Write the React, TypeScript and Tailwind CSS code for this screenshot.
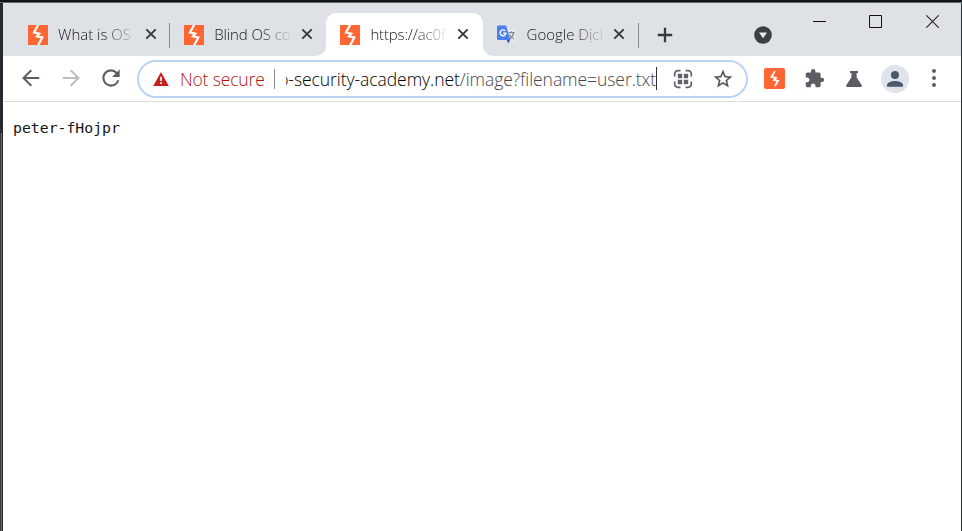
import type { ReactNode } from "react";

function BurpIcon({ rounded = false }: { rounded?: boolean }) {
  return (
    <svg viewBox="0 0 20 20" className="block size-full">
      <rect width="20" height="20" rx={rounded ? 1.8 : 0} fill="#ff6633" />
      {rounded ? (
        <path d="M10.4 3 7.2 8.4l4 .9-1.6 2 3.8.9-3 4.9" fill="none" stroke="#fff" strokeWidth="1.7" />
      ) : (
        <path d="M10.3-.5 6 7.6l5.2 1.1-2.3 2.6 5.4 1.2-4.3 8" fill="none" stroke="#fff" strokeWidth="2.2" />
      )}
    </svg>
  );
}

function TranslateIcon() {
  return (
    <svg viewBox="0 0 20 20" className="block size-full">
      <path d="M8 4.8h10.2v11.4H12z" fill="#e9ebee" />
      <path d="M11.5 7.7h6M14.5 6.2v1.5M16.6 8c-.6 3-2.2 5-4.6 6M12.4 9.5c1 1.8 2.6 3.4 4.8 4.5" fill="none" stroke="#7d8a94" strokeWidth="1.3" />
      <path d="M9.5 14.5h4l-2.4 4z" fill="#3457a8" />
      <path d="M1.3.5h7.8L13.4 15H1.3A1.3 1.3 0 0 1 0 13.7V1.8A1.3 1.3 0 0 1 1.3.5z" fill="#4a80ea" />
      <path d="M8.2 5.9A2.9 2.9 0 1 0 8.9 8.2H6.2" fill="none" stroke="#fff" strokeWidth="1.4" />
    </svg>
  );
}

function CloseIcon() {
  return (
    <svg viewBox="0 0 12 12" className="block size-3 shrink-0">
      <path d="m1.3 1.3 9.4 9.4m0-9.4-9.4 9.4" stroke="#36393e" strokeWidth="1.9" fill="none" />
    </svg>
  );
}

type TabProps = {
  icon: ReactNode;
  title: string;
  tracking: string;
  active?: boolean;
  divider?: boolean;
};

function Tab({ icon, title, tracking, active, divider }: TabProps) {
  return (
    <div
      className={`relative flex h-[43px] w-[156.2px] shrink-0 items-center pl-[14px] pr-[13.5px] pb-0.5 ${
        active ? "rounded-t-[10px] bg-white" : ""
      }`}
    >
      {active && (
        <>
          <svg viewBox="0 0 10 10" className="absolute bottom-0 -left-2.5 size-2.5">
            <path d="M10 0v10H0A10 10 0 0 0 10 0z" fill="#fff" />
          </svg>
          <svg viewBox="0 0 10 10" className="absolute bottom-0 -right-2.5 size-2.5">
            <path d="M0 0v10h10A10 10 0 0 1 0 0z" fill="#fff" />
          </svg>
        </>
      )}
      <span className="mt-0.5 size-5 shrink-0">{icon}</span>
      <span
        className={`ml-[10px] w-[76px] shrink-0 text-[15px] leading-6 font-[350] whitespace-nowrap text-[#15181b] [mask-image:linear-gradient(to_right,#000_60%,transparent_105%)] ${tracking}`}
      >
        {title}
      </span>
      <span className="ml-auto">
        <CloseIcon />
      </span>
      {divider && <span className="absolute top-[10px] right-0 h-[25px] w-px bg-[#85888c]" />}
    </div>
  );
}

function TabStrip() {
  return (
    <div className="flex h-[53px] items-end bg-[#dee1e6] pl-[11px]">
      <Tab icon={<BurpIcon />} title="What is OS" tracking="tracking-[0px]" divider />
      <Tab icon={<BurpIcon />} title="Blind OS co" tracking="tracking-[-0.1px]" />
      <Tab icon={<BurpIcon />} title="https://ac0f" tracking="tracking-[-0.15px]" active />
      <Tab icon={<TranslateIcon />} title="Google Dịch" tracking="tracking-[0px]" divider />
      <div className="flex h-[43px] flex-1 items-center">
        <svg viewBox="0 0 16 16" className="ml-[18.5px] size-4">
          <path d="M8 .8v14.4M.8 8h14.4" stroke="#36393e" strokeWidth="2.3" />
        </svg>
        <svg viewBox="0 0 18 18" className="ml-[81px] size-[18px]">
          <circle cx="9" cy="9" r="8.8" fill="#3c4043" />
          <path d="M5 6.5h8L9 12.2z" fill="#e8eaed" />
        </svg>
      </div>
      <div className="mb-[28px] flex items-center pr-[22px]">
        <svg viewBox="0 0 13 13" className="mr-[43px] size-[13px]">
          <path d="M0 6.5h13" stroke="#111" />
        </svg>
        <svg viewBox="0 0 13 13" className="mr-[44px] size-[13px]">
          <path d="M.5.5h12v12H.5z" fill="none" stroke="#111" />
        </svg>
        <svg viewBox="0 0 13 13" className="size-[13px]">
          <path d="m.3.3 12.4 12.4m0-12.4L.3 12.7" stroke="#222" strokeWidth="1.1" />
        </svg>
      </div>
    </div>
  );
}

function AddressBar() {
  return (
    <div className="ml-[15.5px] flex h-[38px] w-[611px] shrink-0 items-center rounded-full border-[2.5px] border-[#bcd3f5] bg-white pl-[14.5px] text-[17.5px] leading-6 font-[350] whitespace-nowrap">
      <svg viewBox="0 0 16 14" className="h-[14px] w-4 shrink-0">
        <path d="M8 0 15.8 14H.2z" fill="#c5221f" />
        <path d="M8 4.8v4.3M8 10.2v1.8" stroke="#fff" strokeWidth="1.7" />
      </svg>
      <span className="ml-[11px] w-[86px] shrink-0 tracking-[-0.15px] text-[#b3150f]">Not secure</span>
      <span className="ml-[7.5px] h-5 w-[1.5px] shrink-0 bg-[#85888c]" />
      <span className="ml-[11px] flex w-[370px] shrink-0 justify-end overflow-hidden tracking-[-0.06px] text-black">
        <span>
          o-security-academy.net<span className="text-[#45494d]">/image?filename=user.txt</span>
        </span>
      </span>
      <span className="h-[23px] w-px shrink-0 bg-[#333]" />
      <svg viewBox="0 0 20 20" className="ml-4 size-5 shrink-0">
        <path d="M7.5 1.7H4.7a3 3 0 0 0-3 3v2.8M12.5 1.7h2.8a3 3 0 0 1 3 3v2.8M7.5 18.3H4.7a3 3 0 0 1-3-3v-2.8M12.5 18.3h2.8a3 3 0 0 0 3-3v-2.8" fill="none" stroke="#5f6368" strokeWidth="1.7" />
        <path d="M4.8 4.8h4.4v4.4H4.8zM10.8 4.8h4.4v4.4h-4.4zM4.8 10.8h4.4v4.4H4.8zM10.8 10.8h4.4v4.4h-4.4z" fill="#5f6368" />
      </svg>
      <svg viewBox="0 0 24 24" className="ml-[19px] size-[22px] shrink-0">
        <path
          d="m22 9.24-7.19-.62L12 2 9.19 8.63 2 9.24l5.46 4.73L5.82 21 12 17.27 18.18 21l-1.63-7.03L22 9.24zM12 15.4l-3.76 2.27 1-4.28-3.32-2.88 4.38-.38L12 6.1l1.71 4.04 4.38.38-3.32 2.88 1 4.28L12 15.4z"
          fill="#4f5358"
          stroke="#4f5358"
          strokeWidth=".2"
        />
      </svg>
    </div>
  );
}

function Toolbar() {
  return (
    <div className="flex h-[46px] items-center border-b border-[#dcdddf] bg-white pl-[15.5px]">
      <svg viewBox="0 0 24 24" className="mb-px size-6">
        <path d="M20.3 12H4.8M12.3 4.2 4.5 12l7.8 7.8" fill="none" stroke="#5a5e63" strokeWidth="2" />
      </svg>
      <svg viewBox="0 0 24 24" className="mb-px ml-4 size-6">
        <path d="M3.7 12h15.5M11.7 4.2l7.8 7.8-7.8 7.8" fill="none" stroke="#babcbe" strokeWidth="2" />
      </svg>
      <svg viewBox="0 0 24 24" className="mb-px ml-[15px] size-[26px]">
        <path
          d="M17.65 6.35A7.958 7.958 0 0 0 12 4a8 8 0 1 0 7.73 10h-2.08A5.99 5.99 0 0 1 12 18c-3.31 0-6-2.69-6-6s2.69-6 6-6c1.66 0 3.14.69 4.22 1.78L13 11h7V4l-2.35 2.35z"
          fill="#5a5e63"
        />
      </svg>
      <div className="-ml-[2.5px]">
        <AddressBar />
      </div>
      <span className="ml-[16.5px] size-[21px]">
        <BurpIcon rounded />
      </span>
      <svg viewBox="0 0 24 24" className="ml-[19px] size-[21px]">
        <path
          d="M20.5 11H19V7c0-1.1-.9-2-2-2h-4V3.5a2.5 2.5 0 0 0-5 0V5H4c-1.1 0-1.99.9-1.99 2v3.8H3.5c1.49 0 2.7 1.21 2.7 2.7s-1.21 2.7-2.7 2.7H2V20c0 1.1.9 2 2 2h3.8v-1.5c0-1.49 1.21-2.7 2.7-2.7s2.7 1.21 2.7 2.7V22H17c1.1 0 2-.9 2-2v-4h1.5a2.5 2.5 0 0 0 0-5z"
          fill="#5a5e63"
        />
      </svg>
      <svg viewBox="0 0 16 16" className="ml-[21px] size-4">
        <path d="M4 0h8v1.9h-1.4v4.4l5 7.6A1.3 1.3 0 0 1 14.5 16h-13a1.3 1.3 0 0 1-1.1-2.1l5-7.6V1.9H4z" fill="#5a5e63" />
      </svg>
      <svg viewBox="0 0 28 28" className="ml-[18.5px] size-7">
        <circle cx="14" cy="14" r="14" fill="#dfe3ea" />
        <circle cx="14" cy="10" r="4" fill="#4c586b" />
        <path d="M6 21.8v-1.7c0-2.7 5.3-4.1 8-4.1s8 1.4 8 4.1v1.7z" fill="#4c586b" />
      </svg>
      <svg viewBox="0 0 4 18" className="mb-px ml-[23.5px] h-[18px] w-1">
        <path d="M2 2h0M2 9h0M2 16h0" stroke="#5a5e63" strokeWidth="4" strokeLinecap="round" />
      </svg>
    </div>
  );
}

export default function App() {
  return (
    <div className="flex h-[531px] w-[962px] flex-col overflow-hidden bg-[#121217] font-['Open_Sans','Noto_Sans',sans-serif]">
      <div className="h-0.5 shrink-0" />
      <div className="h-px shrink-0 bg-[#66696d]" />
      <div className="flex min-h-0 flex-1">
        <div className="flex w-[3px] shrink-0 flex-col">
          <div className="h-[130px] bg-[#252a30]" />
          <div className="flex-1 border-l border-[#3a3a3a] bg-[#6d6d6d] shadow-[inset_-1px_0_0_#222]" />
        </div>
        <main className="min-w-0 flex-1 bg-white">
          <TabStrip />
          <Toolbar />
          <pre className="pt-4 pl-2.5 font-['DejaVu_Sans_Mono',monospace] text-[14.8px] leading-5 text-[#151515]">
            peter-fHojpr
          </pre>
        </main>
        <div className="w-px shrink-0 bg-[#1f3244]" />
      </div>
    </div>
  );
}
